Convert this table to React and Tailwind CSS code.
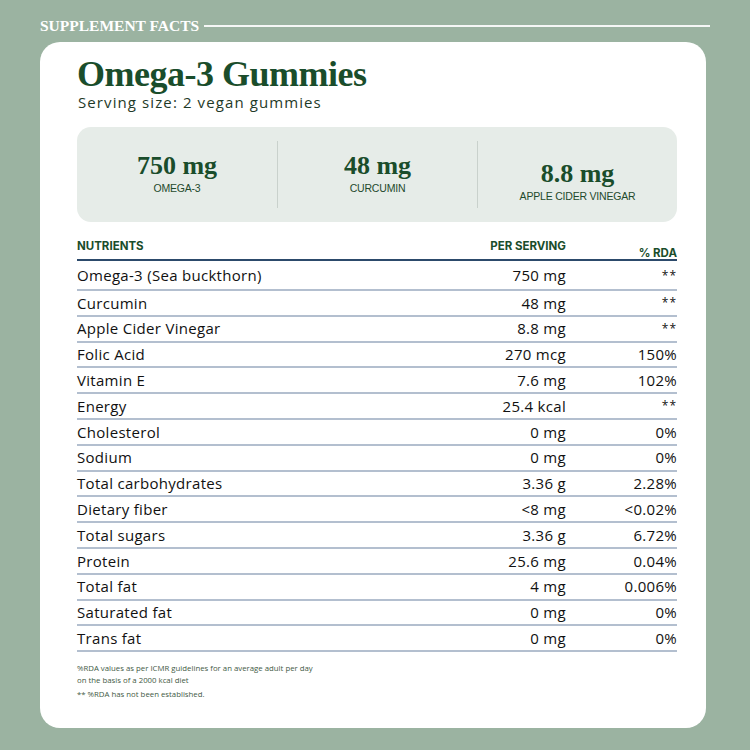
import React from 'react'

const rows = [
    ['Omega-3 (Sea buckthorn)', '750 mg', '**'],
    ['Curcumin', '48 mg', '**'],
    ['Apple Cider Vinegar', '8.8 mg', '**'],
    ['Folic Acid', '270 mcg', '150%'],
    ['Vitamin E', '7.6 mg', '102%'],
    ['Energy', '25.4 kcal', '**'],
    ['Cholesterol', '0 mg', '0%'],
    ['Sodium', '0 mg', '0%'],
    ['Total carbohydrates', '3.36 g', '2.28%'],
    ['Dietary fiber', '<8 mg', '<0.02%'],
    ['Total sugars', '3.36 g', '6.72%'],
    ['Protein', '25.6 mg', '0.04%'],
    ['Total fat', '4 mg', '0.006%'],
    ['Saturated fat', '0 mg', '0%'],
    ['Trans fat', '0 mg', '0%'],
]

const stats = [
    { value: '750 mg', label: 'OMEGA-3', low: false },
    { value: '48 mg', label: 'CURCUMIN', low: false },
    { value: '8.8 mg', label: 'APPLE CIDER VINEGAR', low: true },
]

const serif = "font-['Liberation_Serif',serif]"
const sans = "font-['Open_Sans',sans-serif]"

export default function App() {
    return (
        <div className="w-[750px] h-[750px] bg-[#9bb3a1] pt-[17px] px-[40px] overflow-hidden">
            <div className="flex items-center gap-[5px]">
                <span className={`${serif} text-white font-bold text-[15.5px] leading-[18px]`}>SUPPLEMENT FACTS</span>
                <div className="flex-1 h-[2px] bg-white/90"></div>
            </div>

            <div className="mt-[7px] w-[666px] h-[686px] bg-white rounded-[20px] pl-[37px] pr-[29px] pt-[10px]">
                <h1 className={`${serif} text-[36px] font-bold text-[#1a4d2b] leading-[44px] tracking-[-0.5px]`}>Omega-3 Gummies</h1>
                <p className={`${sans} text-[15px] tracking-[1.1px] text-[#1f3a28] leading-[18px] ml-[1px] mt-[-3px]`}>Serving size: 2 vegan gummies</p>

                <div className="mt-[16px] h-[95px] bg-[#e6ece8] rounded-[14px] grid grid-cols-3 items-center">
                    {stats.map((s, i) => (
                        <div key={s.label} className={`h-[67px] flex flex-col items-center ${i > 0 ? 'border-l border-[#c9d1cc]' : ''} ${s.low ? 'pt-[18px]' : 'pt-[10px]'}`}>
                            <span className={`${serif} text-[26px] font-bold text-[#1a4d2b] leading-[30px]`}>{s.value}</span>
                            <span className="font-['Liberation_Sans',sans-serif] text-[10.5px] text-[#1f4a2c] leading-[14px] tracking-[-0.2px]">{s.label}</span>
                        </div>
                    ))}
                </div>

                <div className="mt-[17px] flex items-end border-b-2 border-[#2c4a6b]">
                    <span className="font-['Inter',sans-serif] flex-1 text-[11.5px] font-bold text-[#1a4d2b] leading-[14px] pb-[6px]">NUTRIENTS</span>
                    <span className="font-['Inter',sans-serif] text-[11.5px] font-bold text-[#1a4d2b] leading-[14px] pb-[6px]">PER SERVING</span>
                    <span className="font-['Inter',sans-serif] w-[111px] text-right text-[11.5px] font-bold text-[#1a4d2b] leading-[12px]">% RDA</span>
                </div>

                <div className={`${sans} text-[15px] tracking-[0.3px] text-[#111]`}>
                    {rows.map((r, i) => (
                        <div key={r[0]} className={`flex items-center border-b-2 border-[#b3bfcf] ${i === 0 ? 'h-[30px] pt-[1px]' : 'h-[25.8px]'}`}>
                            <span className="flex-1">{r[0]}</span>
                            <span className="text-right">{r[1]}</span>
                            <span className={`w-[111px] text-right ${r[2] === '**' ? 'text-[12px] tracking-[1px]' : ''}`}>{r[2]}</span>
                        </div>
                    ))}
                </div>

                <div className={`${sans} mt-[10px] text-[7.8px] text-[#3f5a45] leading-[12px]`}>
                    <p>%RDA values as per ICMR guidelines for an average adult per day</p>
                    <p>on the basis of a 2000 kcal diet</p>
                    <p className="mt-[2px]">** %RDA has not been established.</p>
                </div>
            </div>
        </div>
    )
}
